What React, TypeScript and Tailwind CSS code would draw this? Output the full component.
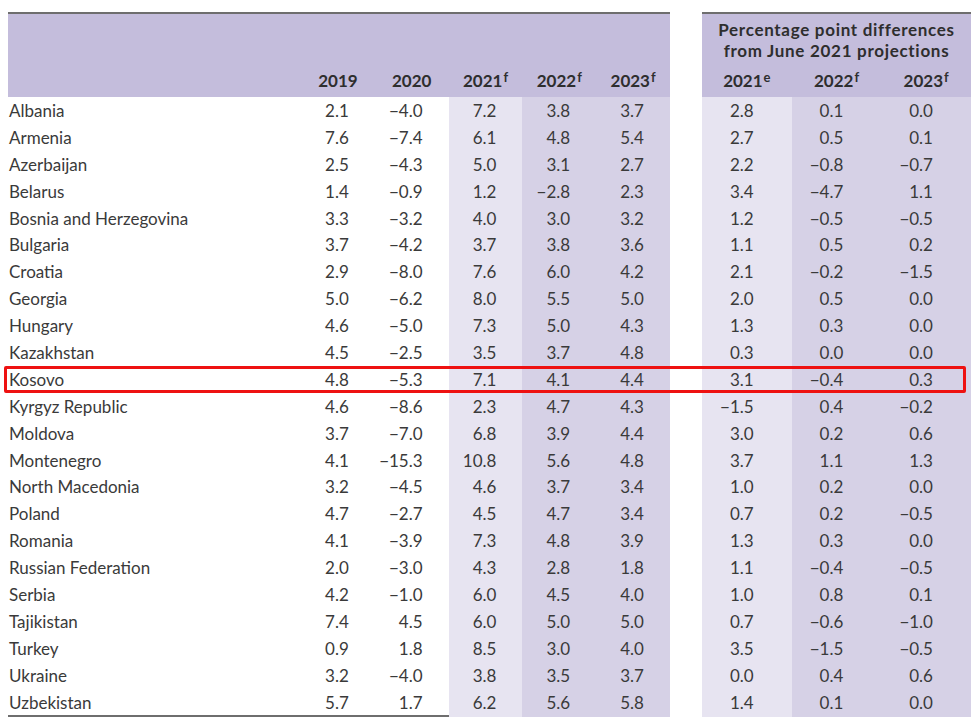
import React from "react";

type Row = [string, string, string, string, string, string, string, string, string];

const rows: Row[] = [
  ["Albania", "2.1", "−4.0", "7.2", "3.8", "3.7", "2.8", "0.1", "0.0"],
  ["Armenia", "7.6", "−7.4", "6.1", "4.8", "5.4", "2.7", "0.5", "0.1"],
  ["Azerbaijan", "2.5", "−4.3", "5.0", "3.1", "2.7", "2.2", "−0.8", "−0.7"],
  ["Belarus", "1.4", "−0.9", "1.2", "−2.8", "2.3", "3.4", "−4.7", "1.1"],
  ["Bosnia and Herzegovina", "3.3", "−3.2", "4.0", "3.0", "3.2", "1.2", "−0.5", "−0.5"],
  ["Bulgaria", "3.7", "−4.2", "3.7", "3.8", "3.6", "1.1", "0.5", "0.2"],
  ["Croatia", "2.9", "−8.0", "7.6", "6.0", "4.2", "2.1", "−0.2", "−1.5"],
  ["Georgia", "5.0", "−6.2", "8.0", "5.5", "5.0", "2.0", "0.5", "0.0"],
  ["Hungary", "4.6", "−5.0", "7.3", "5.0", "4.3", "1.3", "0.3", "0.0"],
  ["Kazakhstan", "4.5", "−2.5", "3.5", "3.7", "4.8", "0.3", "0.0", "0.0"],
  ["Kosovo", "4.8", "−5.3", "7.1", "4.1", "4.4", "3.1", "−0.4", "0.3"],
  ["Kyrgyz Republic", "4.6", "−8.6", "2.3", "4.7", "4.3", "−1.5", "0.4", "−0.2"],
  ["Moldova", "3.7", "−7.0", "6.8", "3.9", "4.4", "3.0", "0.2", "0.6"],
  ["Montenegro", "4.1", "−15.3", "10.8", "5.6", "4.8", "3.7", "1.1", "1.3"],
  ["North Macedonia", "3.2", "−4.5", "4.6", "3.7", "3.4", "1.0", "0.2", "0.0"],
  ["Poland", "4.7", "−2.7", "4.5", "4.7", "3.4", "0.7", "0.2", "−0.5"],
  ["Romania", "4.1", "−3.9", "7.3", "4.8", "3.9", "1.3", "0.3", "0.0"],
  ["Russian Federation", "2.0", "−3.0", "4.3", "2.8", "1.8", "1.1", "−0.4", "−0.5"],
  ["Serbia", "4.2", "−1.0", "6.0", "4.5", "4.0", "1.0", "0.8", "0.1"],
  ["Tajikistan", "7.4", "4.5", "6.0", "5.0", "5.0", "0.7", "−0.6", "−1.0"],
  ["Turkey", "0.9", "1.8", "8.5", "3.0", "4.0", "3.5", "−1.5", "−0.5"],
  ["Ukraine", "3.2", "−4.0", "3.8", "3.5", "3.7", "0.0", "0.4", "0.6"],
  ["Uzbekistan", "5.7", "1.7", "6.2", "5.6", "5.8", "1.4", "0.1", "0.0"],
];

const FONT = { fontFamily: "Lato, 'Open Sans', sans-serif" };

function Yr({ y, s }: { y: string; s?: string }) {
  return (
    <span>
      {y}
      {s && <span className="text-[13px] align-top relative top-[2px] ml-[1px] leading-none">{s}</span>}
    </span>
  );
}

export default function App() {
  return (
    <div className="w-[980px] h-[726px] bg-white text-[#3a3a3a] relative overflow-hidden" style={FONT}>
      <div className="flex pt-[12px] pl-[8px] gap-[32px] text-[17px]">
        {/* Left table */}
        <div className="w-[662px]">
          <div className="border-t-2 border-[#6e6e6e] bg-[#c4bddc] h-[85px] grid grid-cols-[293px_repeat(5,73.8px)] items-end pb-[4px] font-bold text-[#2e2e2e] leading-[24px]">
            <div />
            <div className="text-center"><Yr y="2019" /></div>
            <div className="text-center"><Yr y="2020" /></div>
            <div className="text-center"><Yr y="2021" s="f" /></div>
            <div className="text-center"><Yr y="2022" s="f" /></div>
            <div className="text-center"><Yr y="2023" s="f" /></div>
          </div>
          <div className="border-b-2 border-[#6e6e6e]">
            {rows.map((r) => (
              <div key={r[0]} className="grid grid-cols-[293px_repeat(5,73.8px)] h-[26.9px] leading-[26.9px]">
                <div className="pl-[1px] pt-[1px]">{r[0]}</div>
                <div className="text-right pr-[26px] pt-[1px]">{r[1]}</div>
                <div className="text-right pr-[26px] pt-[1px]">{r[2]}</div>
                <div className="text-right pr-[26px] pt-[1px] bg-[#e7e4f1]">{r[3]}</div>
                <div className="text-right pr-[26px] pt-[1px] bg-[#d6d1e6]">{r[4]}</div>
                <div className="text-right pr-[26px] pt-[1px] bg-[#d6d1e6]">{r[5]}</div>
              </div>
            ))}
          </div>
        </div>
        {/* Right table */}
        <div className="w-[269px]">
          <div className="border-t-2 border-[#6e6e6e] bg-[#c4bddc] h-[85px] flex flex-col font-bold text-[#2e2e2e]">
            <div className="text-center leading-[21px] pt-[5px] tracking-[0.7px]">
              Percentage point differences
              <br />
              from June 2021 projections
            </div>
            <div className="grid grid-cols-3 mt-auto pb-[4px] leading-[24px]">
              <div className="text-center"><Yr y="2021" s="e" /></div>
              <div className="text-center"><Yr y="2022" s="f" /></div>
              <div className="text-center"><Yr y="2023" s="f" /></div>
            </div>
          </div>
          <div className="border-b-2 border-[#6e6e6e]">
            {rows.map((r) => (
              <div key={r[0]} className="grid grid-cols-3 h-[26.9px] leading-[26.9px]">
                <div className="text-right pr-[38px] pt-[1px] bg-[#e7e4f1]">{r[6]}</div>
                <div className="text-right pr-[38px] pt-[1px] bg-[#d6d1e6]">{r[7]}</div>
                <div className="text-right pr-[38px] pt-[1px] bg-[#d6d1e6]">{r[8]}</div>
              </div>
            ))}
          </div>
        </div>
      </div>
      {/* Highlight annotation */}
      <div className="absolute left-[4px] top-[366px] w-[962px] h-[27px] border-[3px] border-[#ee1111] rounded-[2px]" />
    </div>
  );
}
